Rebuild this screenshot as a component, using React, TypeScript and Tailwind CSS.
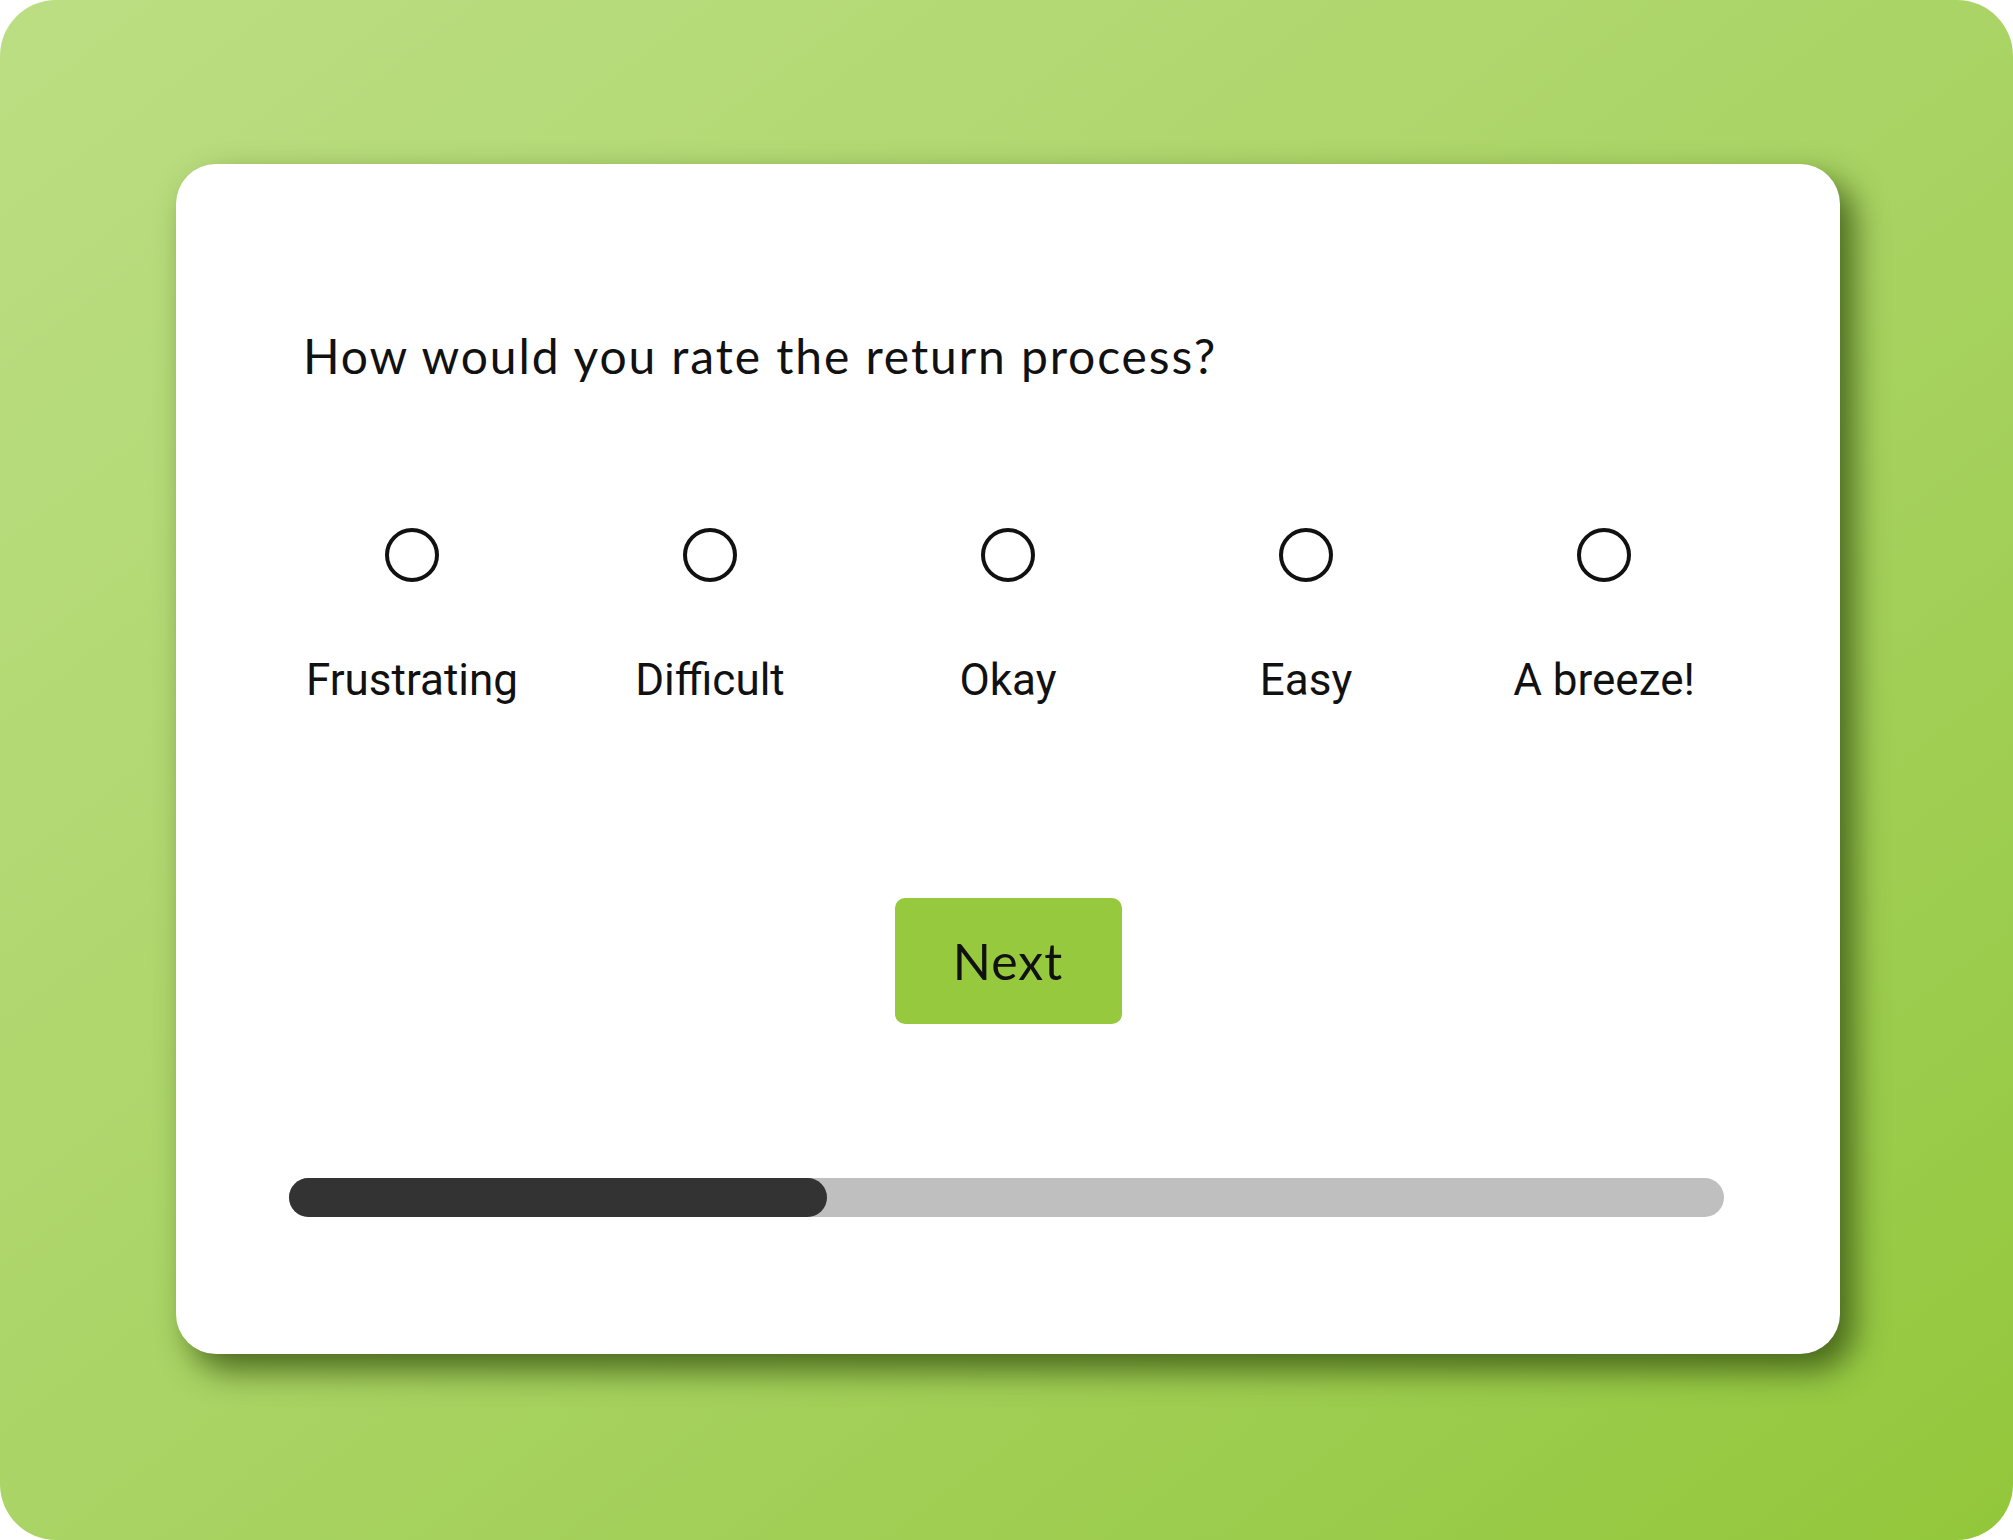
import React from 'react';

const options = ['Frustrating', 'Difficult', 'Okay', 'Easy', 'A breeze!'];

const App = () => {
  return (
    <div className="w-[2013px] h-[1540px] bg-white">
      <div className="w-full h-full rounded-[56px] bg-gradient-to-br from-[#bcde83] via-[#aad465] to-[#93c73a] pt-[164px] pl-[176px]">
        <div className="w-[1664px] h-[1190px] bg-white rounded-[40px] shadow-[14px_16px_32px_rgba(62,92,22,0.9)] flex flex-col">
          <h1 className="pt-[163px] pl-[127px] text-[48px] leading-[58px] tracking-[1.9px] text-[#111] font-['Lato',sans-serif] font-normal">
            How would you rate the return process?
          </h1>

          <div className="mt-[143px] px-[87px] grid grid-cols-5">
            {options.map((label) => (
              <label key={label} className="flex flex-col items-center cursor-pointer">
                <span className="w-[54px] h-[54px] rounded-full border-[4px] border-[#111]" />
                <span className="mt-[72px] text-[44px] leading-[52px] text-[#111] font-['Roboto',sans-serif]">
                  {label}
                </span>
              </label>
            ))}
          </div>

          <div className="mt-[192px] flex justify-center">
            <button className="w-[227px] h-[126px] rounded-[10px] bg-[#96c93d] text-[50px] tracking-[1px] text-[#111] font-['Lato',sans-serif]">
              Next
            </button>
          </div>

          <div className="mt-[154px] ml-[113px] w-[1435px] h-[39px] rounded-full bg-[#bfbfbf]">
            <div className="w-[538px] h-full rounded-full bg-[#333]" />
          </div>
        </div>
      </div>
    </div>
  );
};

export default App;
